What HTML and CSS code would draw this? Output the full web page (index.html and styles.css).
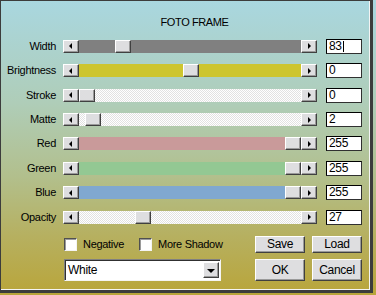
FILE: index.html
```html
<!DOCTYPE html>
<html lang="en">
<head>
    <meta charset="UTF-8">
    <meta name="viewport" content="width=device-width, initial-scale=1.0">
    <title>Foto Frame</title>
    <link rel="stylesheet" href="styles.css">
</head>
<body>
    <div class="dialog">
        <div class="title">FOTO FRAME</div>

        <div class="sliders">
            <label class="label">Width</label>
            <div class="scrollbar">
                <span class="arrow left"></span>
                <div class="track gray"><span class="thumb" style="margin-left: 36px"></span></div>
                <span class="arrow right"></span>
            </div>
            <div class="value">83<span class="caret"></span></div>

            <label class="label">Brightness</label>
            <div class="scrollbar">
                <span class="arrow left"></span>
                <div class="track yellow"><span class="thumb" style="margin-left: 104px"></span></div>
                <span class="arrow right"></span>
            </div>
            <div class="value">0</div>

            <label class="label">Stroke</label>
            <div class="scrollbar">
                <span class="arrow left"></span>
                <div class="track dither"><span class="thumb" style="margin-left: 0px"></span></div>
                <span class="arrow right"></span>
            </div>
            <div class="value">0</div>

            <label class="label">Matte</label>
            <div class="scrollbar">
                <span class="arrow left"></span>
                <div class="track dither"><span class="thumb" style="margin-left: 6px"></span></div>
                <span class="arrow right"></span>
            </div>
            <div class="value">2</div>

            <label class="label">Red</label>
            <div class="scrollbar">
                <span class="arrow left"></span>
                <div class="track red"><span class="thumb" style="margin-left: 206px"></span></div>
                <span class="arrow right"></span>
            </div>
            <div class="value">255</div>

            <label class="label">Green</label>
            <div class="scrollbar">
                <span class="arrow left"></span>
                <div class="track green"><span class="thumb" style="margin-left: 206px"></span></div>
                <span class="arrow right"></span>
            </div>
            <div class="value">255</div>

            <label class="label">Blue</label>
            <div class="scrollbar">
                <span class="arrow left"></span>
                <div class="track blue"><span class="thumb" style="margin-left: 206px"></span></div>
                <span class="arrow right"></span>
            </div>
            <div class="value">255</div>

            <label class="label">Opacity</label>
            <div class="scrollbar">
                <span class="arrow left"></span>
                <div class="track dither"><span class="thumb" style="margin-left: 56px"></span></div>
                <span class="arrow right"></span>
            </div>
            <div class="value">27</div>
        </div>

        <div class="bottom">
            <div class="checks">
                <label class="check"><span class="box"></span>Negative</label>
                <label class="check"><span class="box"></span>More Shadow</label>
            </div>
            <button class="btn">Save</button>
            <button class="btn">Load</button>

            <div class="combo">
                <span class="combo-text">White</span>
                <span class="combo-arrow"></span>
            </div>
            <button class="btn tall">OK</button>
            <button class="btn tall">Cancel</button>
        </div>
    </div>
</body>
</html>
```

FILE: styles.css
```css
* {
    margin: 0;
    padding: 0;
    box-sizing: border-box;
}

html, body {
    width: 376px;
    height: 295px;
    overflow: hidden;
}

body {
    font-family: "Liberation Sans", Arial, sans-serif;
    font-size: 11px;
    letter-spacing: -0.3px;
    color: #000;
    background: linear-gradient(to bottom, #a9d7e0 0%, #afcdb8 35%, #b2bf8c 60%, #b6b060 80%, #b9a53a 100%);
}

.dialog {
    width: 373px;
    height: 293px;
    border-top: 1px solid #3c3c3c;
    border-left: 1px solid #3c3c3c;
    border-right: 3px solid #3c3c3c;
    border-bottom: 3px solid #3c3c3c;
    box-shadow: inset -1px -1px 0 #f4f4f4;
    padding-top: 15px;
}

.title {
    text-align: center;
    padding-left: 18px;
    line-height: 13px;
    letter-spacing: -0.4px;
    margin-bottom: 5px;
}

/* slider rows */
.sliders {
    display: grid;
    grid-template-columns: 55px 254px 38px;
    grid-auto-rows: 24.45px;
    column-gap: 7px;
    align-items: center;
}

.label {
    text-align: right;
    line-height: 13px;
}

.scrollbar {
    display: flex;
    height: 13px;
}

.arrow,
.thumb {
    width: 16px;
    height: 13px;
    flex: none;
    background-color: #dedee0;
    border-top: 1px solid #fff;
    border-left: 1px solid #fff;
    border-right: 1px solid #404040;
    border-bottom: 1px solid #404040;
    box-shadow: inset -1px -1px 0 #9a9a9a;
}

.arrow {
    display: flex;
    align-items: center;
    justify-content: center;
}

.arrow::before {
    content: "";
    border-top: 3px solid transparent;
    border-bottom: 3px solid transparent;
}

.arrow.left::before {
    border-right: 3px solid #000;
    margin-right: 2px;
}

.arrow.right::before {
    border-left: 3px solid #000;
    margin-left: 1px;
}

.track {
    flex: 1;
    display: flex;
}

.track.gray { background: #808080; }
.track.yellow { background: #cdc52e; }
.track.red { background: #c99a9a; }
.track.green { background: #93c893; }
.track.blue { background: #80a8d0; }
.track.dither {
    background: repeating-conic-gradient(#ffffff 0 25%, #e2e2e2 0 50%) 0 0 / 2px 2px;
}

.value {
    justify-self: end;
    width: 36px;
    height: 15px;
    background: #fff;
    border: 1px solid #000;
    border-right-color: #303030;
    border-bottom-color: #303030;
    padding-left: 2px;
    font-size: 12px;
    line-height: 13px;
    display: flex;
    align-items: center;
}

.caret {
    width: 1px;
    height: 11px;
    background: #000;
    margin-left: 1px;
}

/* bottom controls */
.bottom {
    display: grid;
    grid-template-columns: 184px 50px 50px;
    column-gap: 7px;
    row-gap: 6px;
    padding-left: 63px;
    margin-top: 6px;
}

.checks {
    display: flex;
    align-items: center;
    gap: 15px;
    height: 17px;
}

.check {
    display: flex;
    align-items: center;
    gap: 6px;
    line-height: 13px;
}

.box {
    width: 13px;
    height: 13px;
    background: #fff;
    border: 1px solid;
    border-color: #505050 #f4f4f4 #f4f4f4 #505050;
    box-shadow: inset 1px 1px 0 #9a9a9a;
}

.btn {
    font-family: inherit;
    font-size: 12px;
    letter-spacing: -0.3px;
    color: #000;
    height: 17px;
    background: #dedee0;
    border-top: 1px solid #fff;
    border-left: 1px solid #fff;
    border-right: 1px solid #404040;
    border-bottom: 1px solid #404040;
    box-shadow: inset -1px -1px 0 #9a9a9a;
    line-height: 14px;
}

.btn.tall {
    height: 22px;
}

.combo {
    width: 157px;
    height: 22px;
    background: #fff;
    border: 1px solid;
    border-color: #808080 #f4f4f4 #f4f4f4 #808080;
    box-shadow: inset 1px 1px 0 #303030;
    display: flex;
    align-items: center;
    justify-content: space-between;
    padding: 1px 1px 0 3px;
}

.combo-text {
    font-size: 12px;
    line-height: 14px;
}

.combo-arrow {
    width: 16px;
    height: 16px;
    background: #dedee0;
    border-top: 1px solid #fff;
    border-left: 1px solid #fff;
    border-right: 1px solid #404040;
    border-bottom: 1px solid #404040;
    box-shadow: inset -1px -1px 0 #9a9a9a;
    display: flex;
    align-items: center;
    justify-content: center;
}

.combo-arrow::before {
    content: "";
    border-left: 4px solid transparent;
    border-right: 4px solid transparent;
    border-top: 4px solid #000;
    margin-top: 1px;
}
```
